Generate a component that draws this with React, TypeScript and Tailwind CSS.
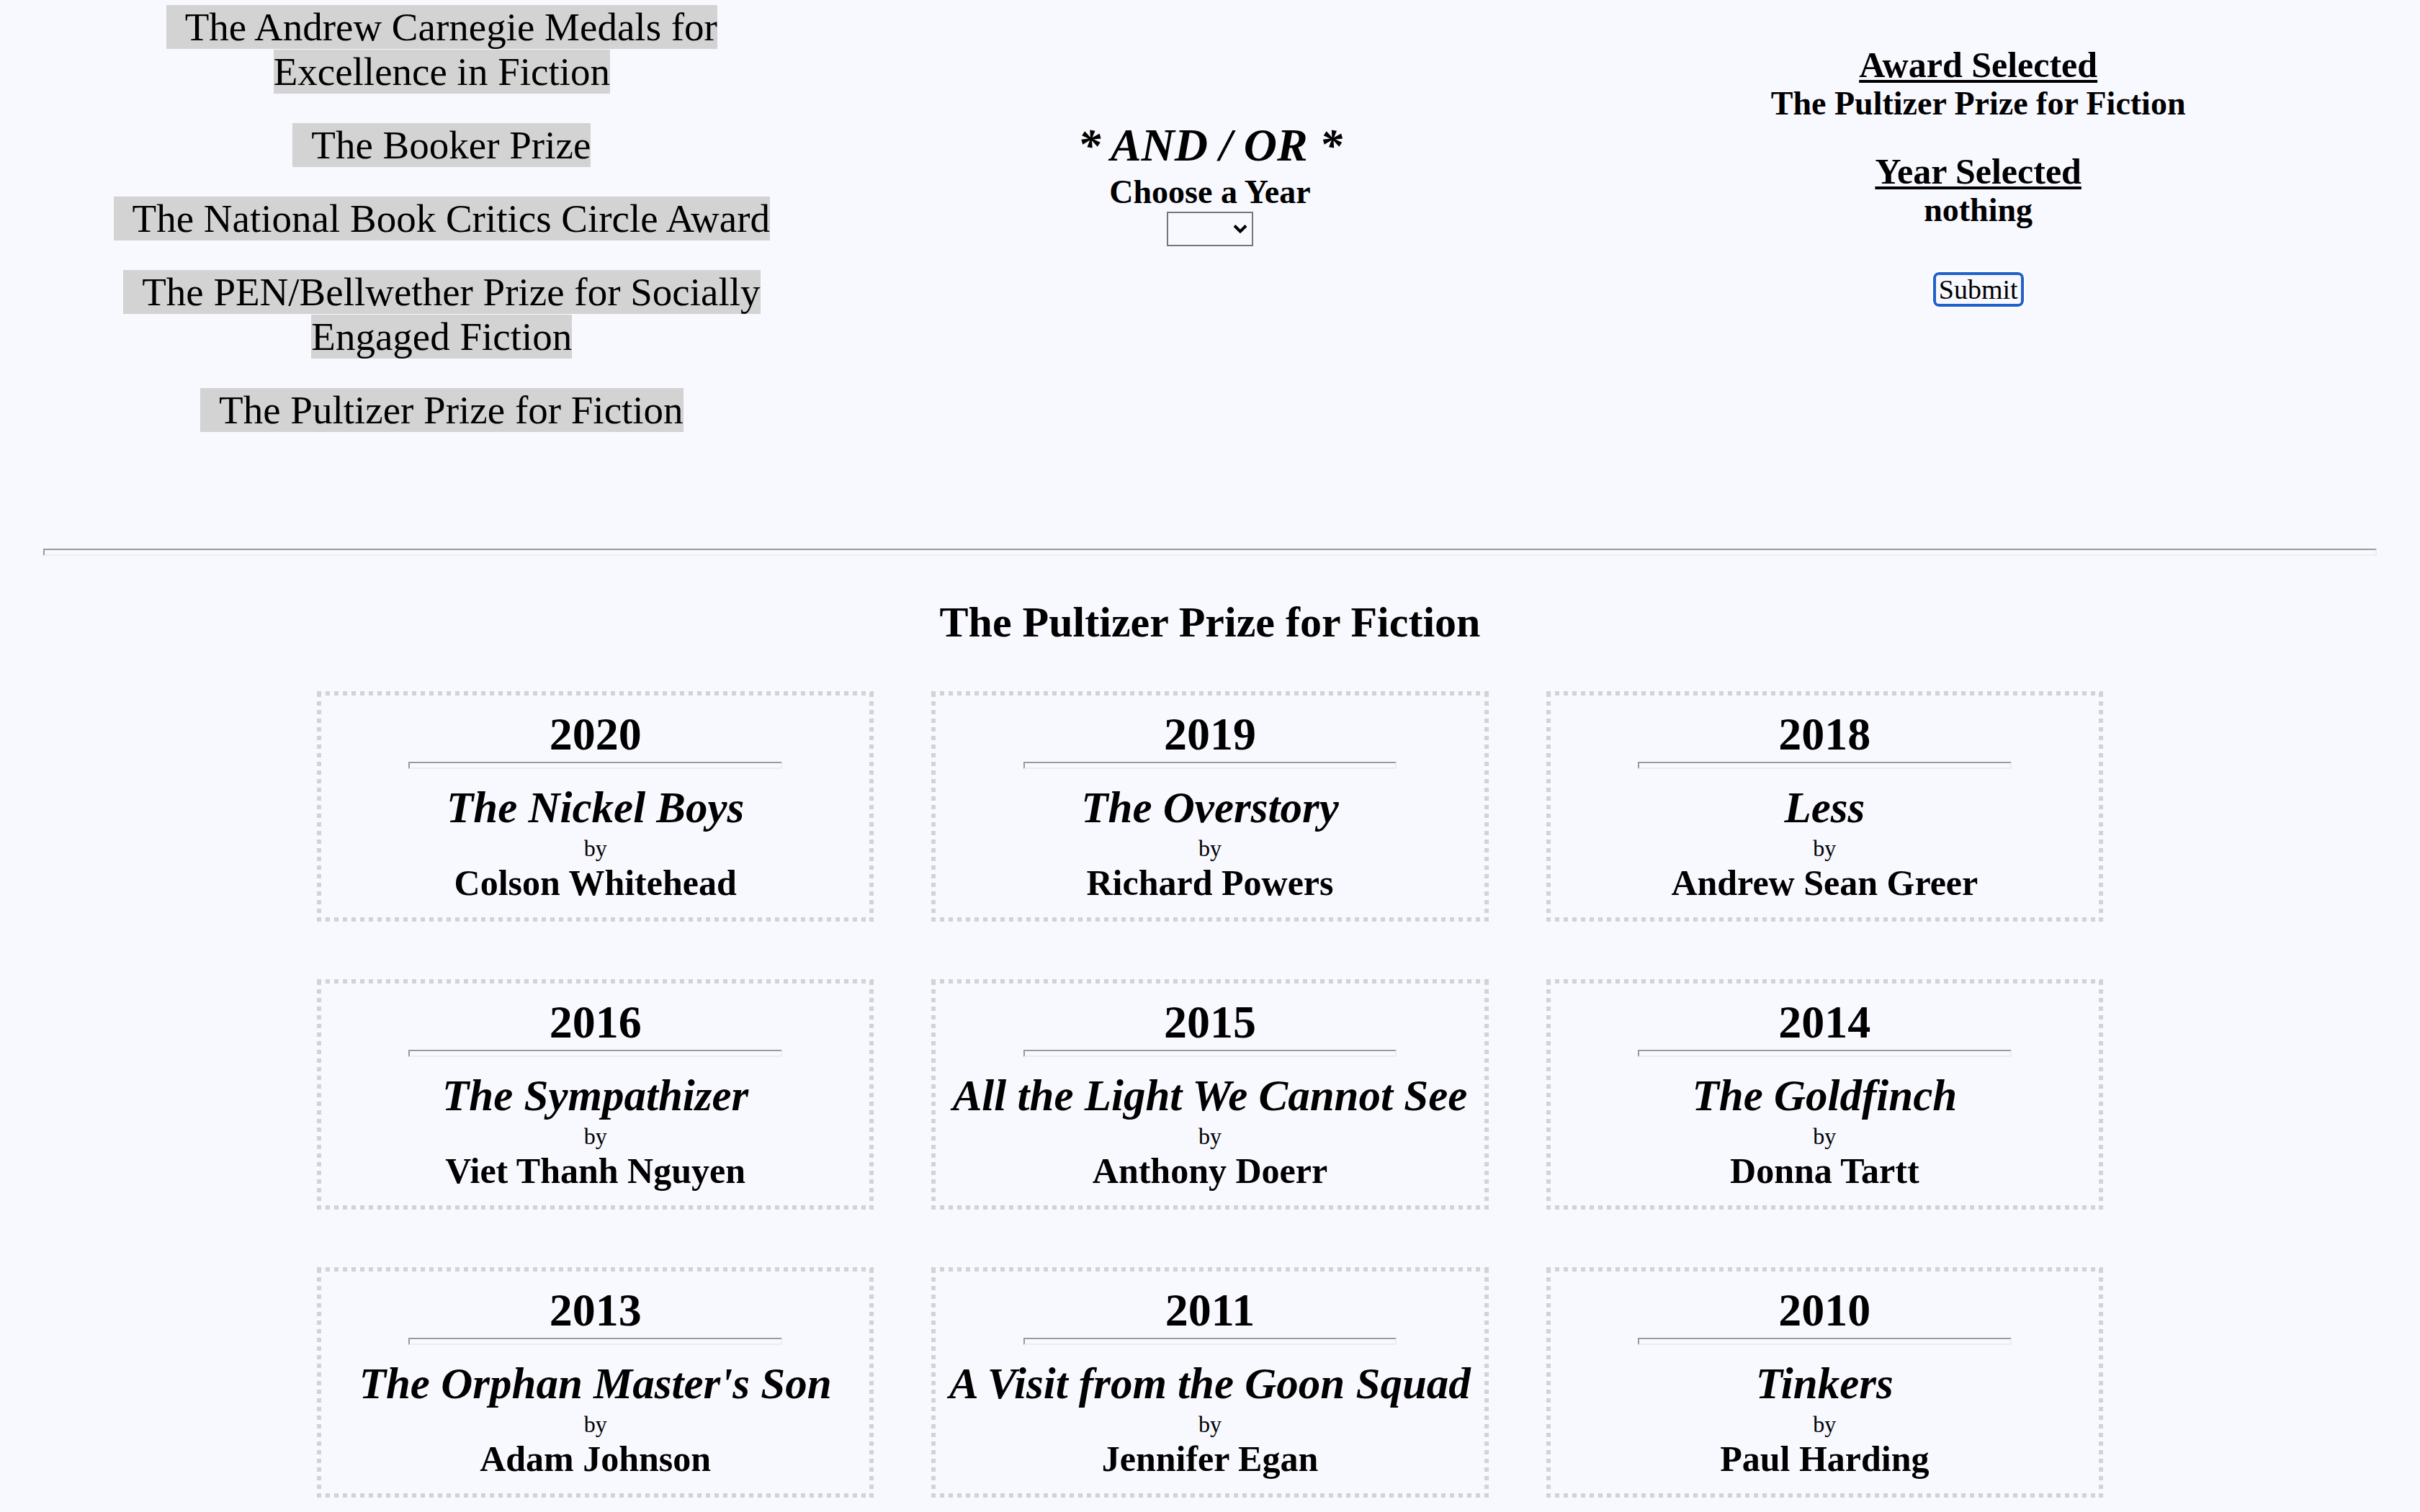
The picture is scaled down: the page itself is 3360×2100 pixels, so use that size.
import { useState } from "react";

const awards = [
  "The Andrew Carnegie Medals for Excellence in Fiction",
  "The Booker Prize",
  "The National Book Critics Circle Award",
  "The PEN/Bellwether Prize for Socially Engaged Fiction",
  "The Pultizer Prize for Fiction",
];

const winners = [
  { year: 2020, title: "The Nickel Boys", author: "Colson Whitehead" },
  { year: 2019, title: "The Overstory", author: "Richard Powers" },
  { year: 2018, title: "Less", author: "Andrew Sean Greer" },
  { year: 2016, title: "The Sympathizer", author: "Viet Thanh Nguyen" },
  { year: 2015, title: "All the Light We Cannot See", author: "Anthony Doerr" },
  { year: 2014, title: "The Goldfinch", author: "Donna Tartt" },
  { year: 2013, title: "The Orphan Master's Son", author: "Adam Johnson" },
  { year: 2011, title: "A Visit from the Goon Squad", author: "Jennifer Egan" },
  { year: 2010, title: "Tinkers", author: "Paul Harding" },
];

function Rule({ className }: { className: string }) {
  return (
    <hr
      className={`h-2.5 border-2 border-t-[#9a9a9a] border-r-[#eeeeee] border-b-[#eeeeee] border-l-[#9a9a9a] ${className}`}
    />
  );
}

// The card frame is a row of square dots, drawn as one repeating background per side.
function WinnerCard({ year, title, author }: { year: number; title: string; author: string }) {
  return (
    <article className="bg-[image:linear-gradient(90deg,#d3d3d3_50%,transparent_50%),linear-gradient(90deg,#d3d3d3_50%,transparent_50%),linear-gradient(0deg,#d3d3d3_50%,transparent_50%),linear-gradient(0deg,#d3d3d3_50%,transparent_50%)] bg-[length:12px_6px,12px_6px,6px_12px,6px_12px] bg-[position:left_top,left_bottom,left_bottom,right_bottom] [background-repeat:repeat-x,repeat-x,repeat-y,repeat-y] px-4 pt-7 pb-7">
      <h3 className="text-[64px] leading-[64px] font-bold">{year}</h3>
      <Rule className="mx-auto mt-1.5 mb-5 w-[70%]" />
      <p className="text-[61px] leading-[68px] font-bold whitespace-nowrap italic">{title}</p>
      <p className="text-[32px] leading-[44px]">by</p>
      <p className="text-[50px] leading-[52px] font-bold">{author}</p>
    </article>
  );
}

export default function App() {
  const [award, setAward] = useState("The Pultizer Prize for Fiction");
  const [year, setYear] = useState("");

  return (
    <main className="min-h-screen bg-[#f8f8ff] px-[60px] pb-5 text-center font-['Liberation_Serif',serif] text-black">
      <section className="grid grid-cols-3 px-5">
        <ul className="flex flex-col gap-10 px-10 pt-[7px] text-[55px] leading-[62px]">
          {awards.map((name) => (
            <li key={name}>
              <label className="bg-[#d3d3d3]">
                <input
                  type="radio"
                  name="award"
                  checked={award === name}
                  onChange={() => setAward(name)}
                  className="w-[26px] appearance-none"
                />
                {name}
              </label>
            </li>
          ))}
        </ul>

        <div className="flex flex-col items-center pt-[162px]">
          <p className="text-[64px] leading-[80px] font-bold italic">* AND / OR *</p>
          <label htmlFor="year" className="text-[46px] leading-[50px] font-bold">
            Choose a Year
          </label>
          <div className="relative mt-0.5">
            <select
              id="year"
              value={year}
              onChange={(e) => setYear(e.target.value)}
              className="block h-12 w-[120px] appearance-none border-2 border-[#767676] bg-[#f8f8ff] px-2 text-[28px]"
            >
              <option value=""></option>
              {winners.map((w) => (
                <option key={w.year}>{w.year}</option>
              ))}
            </select>
            <svg
              viewBox="0 0 20 14"
              className="pointer-events-none absolute top-[17px] right-2 h-3.5 w-5"
              fill="none"
              stroke="black"
              strokeWidth="4"
            >
              <path d="M2 2.5 L10 10.5 L18 2.5" />
            </svg>
          </div>
        </div>

        <div className="flex flex-col items-center pt-[60px] font-bold">
          <h2 className="text-[50px] leading-[60px] underline decoration-4 underline-offset-4">Award Selected</h2>
          <p className="text-[46px] leading-[48px]">{award}</p>
          <h2 className="mt-10 text-[50px] leading-[60px] underline decoration-4 underline-offset-4">Year Selected</h2>
          <p className="text-[46px] leading-[48px]">{year || "nothing"}</p>
          <button
            type="button"
            className="mt-[62px] h-12 w-[126px] rounded-lg border-4 border-[#2161cb] text-[38px] leading-[38px] font-normal outline-2 outline-white"
          >
            Submit
          </button>
        </div>
      </section>

      <Rule className="mt-[161px]" />

      <section className="mx-auto max-w-[2480px]">
        <h1 className="mt-[60px] mb-16 text-[60px] leading-[64px] font-bold">{award}</h1>
        <div className="grid grid-cols-3 gap-20">
          {winners.map((w) => (
            <WinnerCard key={w.year} {...w} />
          ))}
        </div>
      </section>
    </main>
  );
}
